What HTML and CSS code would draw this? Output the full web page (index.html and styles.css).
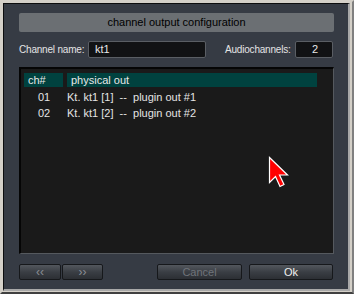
FILE: index.html
```html
<!DOCTYPE html>
<html>
  <head>
    <meta charset="utf-8">
    <title>channel output configuration</title>
    <link rel="stylesheet" href="styles.css">
  </head>
  <body>
    <div class="window">
      <div class="dialog">
        <div class="title">channel output configuration</div>
        <div class="name-row">
          <label class="label" for="name">Channel name:</label>
          <div class="field name-field" id="name">kt1</div>
          <label class="label audio-label" for="channels">Audiochannels:</label>
          <div class="field count-field" id="channels">2</div>
        </div>
        <div class="list">
          <div class="list-head">
            <div class="head-cell ch-cell">ch#</div>
            <div class="head-cell out-cell">physical out</div>
          </div>
          <div class="list-row">
            <div class="ch-num">01</div>
            <div class="out-name">Kt. kt1 [1]&nbsp; --&nbsp; plugin out #1</div>
          </div>
          <div class="list-row">
            <div class="ch-num">02</div>
            <div class="out-name">Kt. kt1 [2]&nbsp; --&nbsp; plugin out #2</div>
          </div>
        </div>
        <div class="buttons">
          <button class="button nav-button">&lsaquo;&lsaquo;</button>
          <button class="button nav-button next">&rsaquo;&rsaquo;</button>
          <div class="spacer"></div>
          <button class="button wide-button disabled">Cancel</button>
          <button class="button wide-button ok">Ok</button>
        </div>
      </div>
    </div>
    <svg class="cursor" width="24" height="32" viewBox="0 0 24 32">
      <polygon points="1.5,1.5 1.5,26.5 7.5,20.5 12,30.5 16,28.5 11.5,19 19.5,19" fill="#ff0000" stroke="#ffffff" stroke-width="1.2"/>
    </svg>
  </body>
</html>
```

FILE: styles.css
```css
body {
margin: 0;
padding: 0;
background-color: #404040;
font-family: "Liberation Sans", Arial, sans-serif;
font-size: 10px;
}

.window {
width: 354px;
height: 294px;
box-sizing: border-box;
border-top: 2px solid #d4d0c8;
border-left: 2px solid #d4d0c8;
border-right: 2px solid #808080;
border-bottom: 2px solid #404040;
background-color: #d4d0c8;
}

.dialog {
width: 347px;
height: 288px;
box-sizing: border-box;
margin: 1px 0 0 1px;
border-top: 1px solid #0c0d0e;
border-left: 1px solid #0c0d0e;
border-right: 2px solid #a8a8a8;
border-bottom: 2px solid #a8a8a8;
background-color: #363b44;
padding: 9px 14px 9px 15px;
display: flex;
flex-direction: column;
}

.title {
height: 19px;
background-color: #6b6f73;
border-radius: 2px;
color: #000000;
text-align: center;
line-height: 19px;
font-size: 11px;
}

.name-row {
display: flex;
align-items: center;
margin-top: 9px;
height: 17px;
}

.label {
flex-shrink: 0;
width: 62px;
white-space: nowrap;
color: #e4e4e4;
font-size: 10px;
letter-spacing: -0.2px;
}

.field {
flex-shrink: 0;
box-sizing: border-box;
height: 17px;
background-color: #111214;
border: 1px solid #5a5e64;
border-radius: 2px;
color: #e8e8e8;
font-size: 11px;
line-height: 15px;
padding: 0 6px;
}

.name-field {
width: 118px;
margin-left: 7px;
}

.audio-label {
margin-left: 19px;
}

.count-field {
width: 38px;
margin-left: auto;
margin-right: 1px;
text-align: right;
padding-right: 14px;
}

.list {
margin-top: 9px;
height: 187px;
box-sizing: border-box;
background-color: #1a1a1a;
border-top: 2px solid #050505;
border-left: 2px solid #050505;
border-right: 1px solid #55595e;
border-bottom: 1px solid #55595e;
padding: 4px 16px 0 3px;
}

.list-head {
display: flex;
gap: 4px;
height: 14px;
}

.head-cell {
background-color: #00423f;
color: #e8e8e8;
font-size: 11px;
line-height: 14px;
padding-left: 4px;
}

.ch-cell {
width: 39px;
box-sizing: border-box;
}

.out-cell {
flex: 1;
}

.list-row {
display: flex;
gap: 4px;
height: 16px;
line-height: 16px;
color: #e4e4e4;
font-size: 11px;
}

.list-head + .list-row {
margin-top: 2px;
}

.ch-num {
width: 39px;
box-sizing: border-box;
padding-left: 14px;
}

.buttons {
display: flex;
margin-top: 10px;
height: 16px;
}

.button {
box-sizing: border-box;
height: 16px;
padding: 0;
background: linear-gradient(#53575d, #3a3e44 50%, #2c2f34);
border: 1px solid #16181b;
border-radius: 2px;
color: #f0f0f0;
font-family: "Liberation Sans", Arial, sans-serif;
font-size: 11px;
line-height: 13px;
}

.nav-button {
width: 42px;
color: #8a8e94;
font-size: 12px;
}

.next {
width: 41px;
margin-left: 1px;
}

.spacer {
flex: 1;
}

.wide-button {
width: 85px;
}

.disabled {
color: #70747a;
}

.ok {
width: 84px;
margin-left: 7px;
margin-right: 1px;
}

.cursor {
position: absolute;
left: 268px;
top: 156px;
}
```
